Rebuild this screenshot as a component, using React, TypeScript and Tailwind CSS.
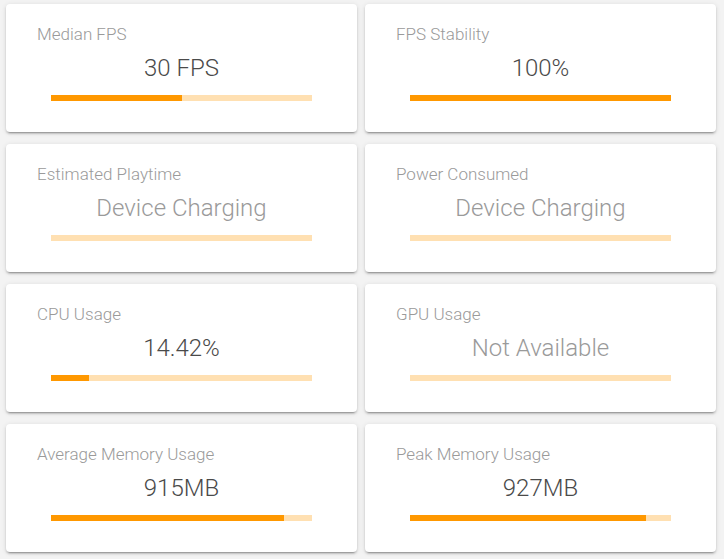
import React from "react";

type Stat = {
  title: string;
  value: string;
  fill: number;
  muted?: boolean;
};

const stats: Stat[] = [
  { title: "Median FPS", value: "30 FPS", fill: 50 },
  { title: "FPS Stability", value: "100%", fill: 100 },
  { title: "Estimated Playtime", value: "Device Charging", fill: 0, muted: true },
  { title: "Power Consumed", value: "Device Charging", fill: 0, muted: true },
  { title: "CPU Usage", value: "14.42%", fill: 14.42 },
  { title: "GPU Usage", value: "Not Available", fill: 0, muted: true },
  { title: "Average Memory Usage", value: "915MB", fill: (915 / 1024) * 100 },
  { title: "Peak Memory Usage", value: "927MB", fill: (927 / 1024) * 100 },
];

function StatCard({ title, value, fill, muted }: Stat) {
  return (
    <div className="h-[128px] rounded bg-white pt-[18px] shadow-[0px_3px_1px_-2px_rgba(0,0,0,0.2),0px_2px_2px_0px_rgba(0,0,0,0.14),0px_1px_5px_0px_rgba(0,0,0,0.12)]">
      <div className="pl-[31px] text-[17px] leading-6 font-light text-[#9a9a9a]">
        {title}
      </div>
      <div
        className={
          "mt-[6px] text-center text-2xl leading-8 font-light " +
          (muted ? "text-[#9a9a9a]" : "text-[#4a4a4a]")
        }
      >
        {value}
      </div>
      <div className="mx-[45px] mt-[11px] h-[6px] bg-[#ffe0b2]">
        <div className="h-full bg-[#ff9800]" style={{ width: `${fill}%` }} />
      </div>
    </div>
  );
}

export default function App() {
  return (
    <div
      className="min-h-[559px] w-[724px] bg-[#f3f3f3] pt-[4px] pr-[8px] pl-[6px]"
      style={{ fontFamily: "'Roboto Light', Roboto, 'Noto Sans', sans-serif" }}
    >
      <div className="grid grid-cols-2 gap-x-2 gap-y-3">
        {stats.map((s) => (
          <StatCard key={s.title} {...s} />
        ))}
      </div>
    </div>
  );
}
